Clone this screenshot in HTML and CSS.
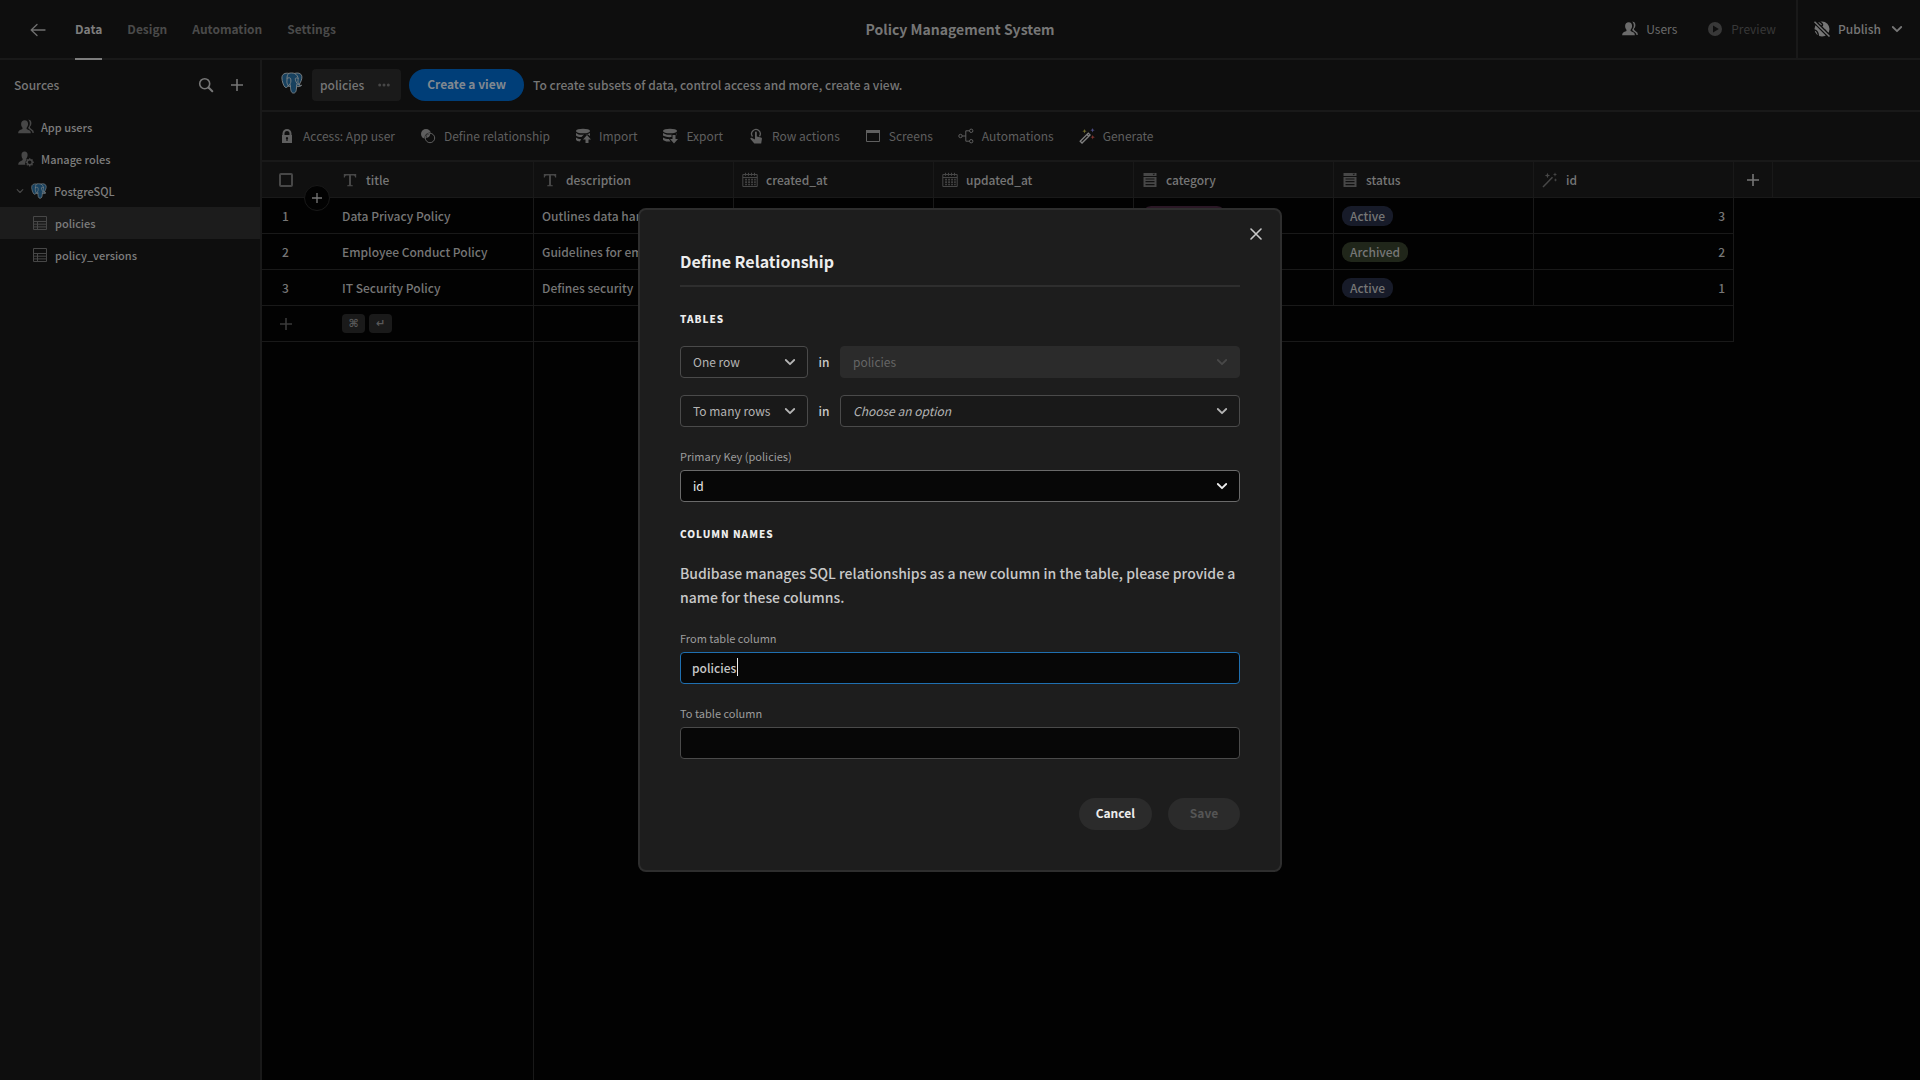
FILE: index.html
```html
<!DOCTYPE html>
<html lang="en">
<head>
<meta charset="utf-8">
<title>Policy Management System</title>
<link rel="stylesheet" href="styles.css">
</head>
<body>
<svg class="sprite" aria-hidden="true">
  <symbol id="users" viewBox="0 0 16 16"><path fill="currentColor" d="M10 .8c2.300-.5 3.600 1.300 3.400 3.600-.1 1.500-.8 2.500-1.300 3.200-.3.5-.1 1.300.4 1.600l3 2.500.3 2.200h-1.300c-.2-1.200-.6-1.900-1.500-2.500l-2.300-1.600c-.5-.4-.5-1.200-.2-1.700.8-1 1.300-2.200 1.300-3.700 0-1.700-.6-3-1.800-3.600z"/><path fill="currentColor" d="M6.700 1.300c2.200 0 3.400 1.600 3.400 3.700 0 1.500-.6 2.600-1.300 3.500-.4.5-.3 1.500.3 1.800 2 1 3.600 1.300 3.800 3.900H.1c.2-2.600 1.700-3 3.900-3.900.6-.3.7-1.300.3-1.800C3.600 7.600 3.100 6.500 3.100 5c0-2.100 1.400-3.700 3.600-3.700z"/></symbol>
  <symbol id="role" viewBox="0 0 16 16"><path fill="currentColor" d="M6.600.5c2 0 3 1.500 3 3.400 0 1.600-.6 2.600-1.200 3.500-.3.500-.2 1 .2 1.300-1.400 1.400-1.800 3.300-1.200 5H.2c.1-2.600 1.500-3.200 3.800-4.200.8-.3.900-1.300.5-1.900C3.900 6.700 3.500 5.600 3.500 4c0-2 1-3.500 3.100-3.500z"/><circle cx="11.700" cy="11.300" r="2.500" fill="none" stroke="currentColor" stroke-width="1.400"/><path stroke="currentColor" stroke-width="1.400" d="M11.700 7.200v1.500M11.700 13.900v1.500M7.600 11.300h1.500M14.300 11.300h1.500M8.800 8.400l1 1M13.500 13.200l1 1M8.800 14.200l1-1M13.500 9.400l1-1"/></symbol>
  <symbol id="postgres" viewBox="0 0 24 24"><path fill="#17415f" stroke="#7f8385" stroke-width="1" stroke-linejoin="round" d="M8.500 1.500C4.500.8 1 2 1 6.500c0 3 1.700 8.700 3.500 10.100 1.200.9 2.200.1 3.500-1.400.7.500 1.500.6 2.300.5.100 2.300.3 7.300 3.200 7.300 2.800 0 3.300-2.500 3.500-7.200 1.500.4 4.200.3 5.500-1.300-.8.100-2.300.2-2.900-.2C21.800 10.800 23.200 7.200 22.700 4.600 22 1 17.700.600 14.900 1.600 12.700.9 10.300.9 8.500 1.500z"/><path fill="none" stroke="#7f8385" stroke-width="1" stroke-linecap="round" d="M8.500 1.500C6.700 3 6.500 5 6.600 7.400c.1 2-.6 3.300.2 5.300.3.900.8 1.500 1.200 2.500M6.700 6.800c1.500-.8 3.700-.8 3.900.7.100 1.500.6 3.300-.6 5.200-.5.900-1.400 1.600-2 2.500M10.300 15.700c.2-1.200.1-1.800-.5-2.300M14.900 1.600c3 1.600 3.700 4 3.800 5.600.1 1.800-.7 3.300.1 4.500.4.700.8 1.100.8 1.700M18.700 6.900c-1.200-.7-3-.6-3.100.500 0 1.500.500 2.700 1.600 4.700.5 1 .9 1.500 2.400 1.300M17 15.600c-.2-1.200.100-1.600.6-2.500"/></symbol>
  <symbol id="table" viewBox="0 0 16 16"><path fill="none" stroke="currentColor" d="M1.500 1.500h13v13h-13zM1.500 6.500h13M1.500 9.200h13M1.500 11.900h13M5.500 6.500v8"/></symbol>
  <symbol id="chevron" viewBox="0 0 12 12"><path fill="none" stroke="currentColor" stroke-width="1.800" stroke-linecap="round" stroke-linejoin="round" d="M1.800 4L6 8.200 10.200 4"/></symbol>
  <symbol id="plus" viewBox="0 0 12 12"><path stroke="currentColor" stroke-width="1.600" d="M6 0v12M0 6h12"/></symbol>
  <symbol id="text" viewBox="0 0 16 16"><path fill="currentColor" d="M1.800 2h12.400v3.500h-1.100c-.2-1.300-.6-2-1.800-2H9v8.700c0 .7.300 1 1.800 1.100v.9H5.200v-.9C6.700 13.200 7 12.900 7 12.200V3.500H4.700c-1.200 0-1.600.7-1.800 2H1.800z"/></symbol>
  <symbol id="calendar" viewBox="0 0 16 16"><path fill="none" stroke="currentColor" d="M.8 2.500h14.400v12H.8zM.8 5.500h14.400M3.500.8v3M6.500.8v3M9.500.8v3M12.500.8v3"/><path stroke="currentColor" stroke-width="1.700" stroke-dasharray="1.700 1.300" d="M3.200 7.600h10.500M3.200 10.100h10.500M3.200 12.500h10.500"/></symbol>
  <symbol id="list" viewBox="0 0 16 16"><path fill="currentColor" fill-rule="evenodd" d="M1.500 1h13v3h-13zM10.500 1.700l1.300 1.500 1.300-1.500zM1.500 5h13v10h-13zM3.500 6.500v1h9v-1zM3.500 9v1.200h9V9zM3.500 12v1.200h9V12z"/></symbol>
  <symbol id="wand" viewBox="0 0 16 16"><path stroke="currentColor" stroke-width="1.500" d="M1 15L10.500 5.300"/><path fill="currentColor" d="M5.500.8l.7 2 2 .7-2 .8-.7 2-.8-2-2-.8 2-.7zM13 .3l.6 1.600 1.600.6-1.600.6-.6 1.600-.6-1.600-1.600-.6 1.600-.6zM13.500 6.300l.5 1.200 1.200.5-1.200.5-.5 1.200-.5-1.200-1.200-.5 1.200-.5z"/></symbol>
</svg>

<div class="app">
  <header class="topbar">
    <nav class="tabs">
      <a class="back" href="#" aria-label="Back"><svg class="i16" viewBox="0 0 16 16"><path fill="none" stroke="currentColor" stroke-width="1.300" stroke-linecap="round" stroke-linejoin="round" d="M15 8H1.200M7 2.500L1.200 8 7 13.500"/></svg></a>
      <a class="tab active" href="#">Data</a>
      <a class="tab" href="#">Design</a>
      <a class="tab" href="#">Automation</a>
      <a class="tab" href="#">Settings</a>
    </nav>
    <h1 class="app-name">Policy Management System</h1>
    <div class="top-actions">
      <button class="top-btn"><svg class="i16"><use href="#users"/></svg>Users</button>
      <button class="top-btn preview" disabled><svg class="i16" viewBox="0 0 16 16"><path fill="currentColor" fill-rule="evenodd" d="M8 1a7 7 0 1 0 0 14A7 7 0 0 0 8 1zM6 4.600L11.800 8 6 11.400z"/></svg>Preview</button>
      <button class="top-btn publish"><svg class="i16" viewBox="0 0 16 16"><circle cx="8" cy="8" r="7.500" fill="currentColor"/><path stroke="#0e0e0e" stroke-width="1.400" fill="none" d="M5 0c1 2 3 1.500 3.500 3.500S6 5 6 6M10 9c1.500 0 2 1 1.500 3M0 9c2 0 4 2 4.500 6"/><path stroke="#0e0e0e" stroke-width="4" d="M0 0l16 16"/><path stroke="currentColor" stroke-width="1.500" d="M.5.8l15 14.700"/></svg>Publish<svg class="i12"><use href="#chevron"/></svg></button>
    </div>
  </header>

  <div class="body">
    <aside class="sidebar">
      <div class="side-head">
        <h2 class="side-title">Sources</h2>
        <button class="icon-btn" aria-label="Search"><svg class="i16" viewBox="0 0 16 16"><circle cx="6.700" cy="6.700" r="5" fill="none" stroke="currentColor" stroke-width="1.600"/><path stroke="currentColor" stroke-width="2" stroke-linecap="round" d="M10.500 10.500L14.300 14.300"/></svg></button>
        <button class="icon-btn" aria-label="Add source"><svg class="i12"><use href="#plus"/></svg></button>
      </div>
      <nav class="tree">
        <a class="node" href="#"><svg class="i16"><use href="#users"/></svg>App users</a>
        <a class="node" href="#"><svg class="i16"><use href="#role"/></svg>Manage roles</a>
        <a class="node source" href="#"><svg class="i8"><use href="#chevron"/></svg><svg class="i16"><use href="#postgres"/></svg>PostgreSQL</a>
        <a class="node child selected" href="#"><svg class="i16"><use href="#table"/></svg>policies</a>
        <a class="node child" href="#"><svg class="i16"><use href="#table"/></svg>policy_versions</a>
      </nav>
    </aside>

    <main class="main">
      <div class="viewbar">
        <svg class="logo"><use href="#postgres"/></svg>
        <a class="view" href="#">policies<svg class="dots" viewBox="0 0 12 12"><g fill="currentColor"><circle cx="1.700" cy="6" r="1.500"/><circle cx="6" cy="6" r="1.500"/><circle cx="10.300" cy="6" r="1.500"/></g></svg></a>
        <button class="create">Create a view</button>
        <p class="hint">To create subsets of data, control access and more, create a view.</p>
      </div>
      <div class="toolbar">
        <button class="tool"><svg class="i16" viewBox="0 0 16 16"><path fill="currentColor" fill-rule="evenodd" d="M3.500 7V5.500a4.500 4.500 0 0 1 9 0V7h.5v8H3V7zM5.500 7h5V5.500a2.500 2.500 0 0 0-5 0zM8 9a1.200 1.200 0 0 0-.6 2.200V13h1.200v-1.800A1.200 1.200 0 0 0 8 9z"/></svg>Access: App user</button>
        <button class="tool"><svg class="i16" viewBox="0 0 16 16"><circle cx="6" cy="6" r="5" fill="currentColor"/><circle cx="10" cy="10" r="5.500" fill="#0e0e0e"/><circle cx="10" cy="10" r="4.700" fill="none" stroke="currentColor"/><path fill="currentColor" d="M6.200 10a4.500 4.500 0 0 1 4-4.200 4.500 4.500 0 0 1-4 4.200z"/></svg>Define relationship</button>
        <button class="tool"><svg class="i16" viewBox="0 0 16 16"><ellipse cx="8" cy="3" rx="7" ry="2.300" fill="currentColor"/><path fill="currentColor" d="M1 5c2 2 6 2 8 1.500L6.500 9C4 9 2 8.500 1 7.500zM1 9.500c1.500 1 3 1.500 5 1.500L5 13.500C3 13.500 1 12.500 1 11.500zM10 6.500c2-.2 4-.7 5-1.500v3l-3-2.200zM12 7l4 4.500h-2.500V15h-3v-3.500H8z"/></svg>Import</button>
        <button class="tool"><svg class="i16" viewBox="0 0 16 16"><ellipse cx="8" cy="3" rx="7" ry="2.300" fill="currentColor"/><path fill="currentColor" d="M1 5c3 2 7 2 8.500 1.500V9C6 9.500 2 8.500 1 7.500zM1 9.500c2 1 3.500 1.500 6 1.500l1.500 2.500C4 14 1 12.500 1 11.500zM10.500 7h3v4H16l-4 4.500L8 11h2.500zM14.500 5.800L15 5v3z"/></svg>Export</button>
        <button class="tool"><svg class="i16" viewBox="0 0 16 16"><path fill="none" stroke="currentColor" stroke-width="1.300" d="M4.500 8.500a4.300 4.300 0 1 1 7-.2"/><path fill="currentColor" d="M7 4.500c0-1.300 1.800-1.300 1.800 0v4l4.200 1c.8.300 1 .8.900 1.500l-.7 4.500H6.300L2.500 11c-.5-.8.5-1.500 1.500-1l3 1.500z"/></svg>Row actions</button>
        <button class="tool"><svg class="i16" viewBox="0 0 16 16"><path fill="none" stroke="currentColor" d="M1.500 2.500h13v11h-13z"/><path fill="currentColor" d="M1 2h14v3H1z"/></svg>Screens</button>
        <button class="tool"><svg class="i16" viewBox="0 0 16 16"><g fill="none" stroke="currentColor"><circle cx="2.500" cy="8" r="1.700"/><circle cx="13.200" cy="2.800" r="1.700"/><circle cx="13.200" cy="13.200" r="1.700"/><path d="M4.200 8h3.600M11.500 2.800H7.800v10.400h3.700"/></g></svg>Automations</button>
        <button class="tool generate"><svg class="i16" viewBox="0 0 16 16"><path fill="none" stroke="#808080" stroke-width="1.300" d="M1.200 13.200L9.300 5.100l1.800 1.800-8.100 8.100zM8 6.500l1.800 1.800"/><path fill="#6f6a2c" d="M5.500 1l.6 1.600 1.600.6-1.600.6-.6 1.600-.6-1.600-1.600-.6 1.600-.6z"/><path fill="#4a4a80" d="M13.500 0l.6 1.600 1.600.6-1.600.6-.6 1.600-.6-1.600-1.600-.6 1.600-.6z"/><path fill="#80352f" d="M13.700 7l.6 1.600 1.600.6-1.600.6-.6 1.600-.6-1.600-1.600-.6 1.600-.6z"/></svg>Generate</button>
      </div>

      <div class="grid">
        <table class="rows">
          <colgroup><col class="c-num"><col class="c"><col class="c"><col class="c"><col class="c"><col class="c"><col class="c"><col class="c"><col class="c-add"><col></colgroup>
          <thead>
            <tr>
              <th class="num"><input class="check" type="checkbox" aria-label="Select all rows"></th>
              <th><span class="head"><svg class="i16"><use href="#text"/></svg>title</span></th>
              <th><span class="head"><svg class="i16"><use href="#text"/></svg>description</span></th>
              <th><span class="head"><svg class="i16"><use href="#calendar"/></svg>created_at</span></th>
              <th><span class="head"><svg class="i16"><use href="#calendar"/></svg>updated_at</span></th>
              <th><span class="head"><svg class="i16"><use href="#list"/></svg>category</span></th>
              <th><span class="head"><svg class="i16"><use href="#list"/></svg>status</span></th>
              <th><span class="head"><svg class="i16"><use href="#wand"/></svg>id</span></th>
              <th class="add"><button class="icon-btn" aria-label="Add column"><svg class="i12"><use href="#plus"/></svg></button></th>
              <th class="rest"></th>
            </tr>
          </thead>
          <tbody>
            <tr><td class="num">1</td><td>Data Privacy Policy</td><td>Outlines data handling</td><td></td><td></td><td><span class="pill pink">Compliance</span></td><td><span class="pill blue">Active</span></td><td class="right">3</td></tr>
            <tr><td class="num">2</td><td>Employee Conduct Policy</td><td>Guidelines for employees</td><td></td><td></td><td></td><td><span class="pill green">Archived</span></td><td class="right">2</td></tr>
            <tr><td class="num">3</td><td>IT Security Policy</td><td>Defines security</td><td></td><td></td><td></td><td><span class="pill blue">Active</span></td><td class="right">1</td></tr>
            <tr class="new"><td class="num"><svg class="i12"><use href="#plus"/></svg></td><td><span class="keys"><kbd>⌘</kbd><kbd>↵</kbd></span></td><td colspan="6"></td></tr>
          </tbody>
        </table>
        <div class="sticky-tail"></div>
        <button class="insert" aria-label="Insert row"><svg class="i10"><use href="#plus"/></svg></button>
      </div>
    </main>
  </div>
</div>

<div class="overlay">
  <form class="modal" role="dialog" aria-labelledby="dlg-title">
    <button class="close" type="button" aria-label="Close"><svg class="i12" viewBox="0 0 12 12"><path stroke="currentColor" stroke-width="1.600" stroke-linecap="round" d="M1 1l10 10M11 1L1 11"/></svg></button>
    <h2 class="title" id="dlg-title">Define Relationship</h2>
    <section class="block">
      <h3 class="section">Tables</h3>
      <div class="pair">
        <span class="select"><select aria-label="From cardinality"><option>One row</option></select><svg class="i12"><use href="#chevron"/></svg></span>
        <span class="in">in</span>
        <span class="select off"><select aria-label="From table" disabled><option>policies</option></select><svg class="i12"><use href="#chevron"/></svg></span>
      </div>
      <div class="pair">
        <span class="select"><select aria-label="To cardinality"><option>To many rows</option></select><svg class="i12"><use href="#chevron"/></svg></span>
        <span class="in">in</span>
        <span class="select empty"><select aria-label="To table"><option>Choose an option</option></select><svg class="i12"><use href="#chevron"/></svg></span>
      </div>
    </section>
    <div class="field">
      <label for="pk">Primary Key (policies)</label>
      <span class="select solid"><select id="pk"><option>id</option></select><svg class="i12"><use href="#chevron"/></svg></span>
    </div>
    <section class="block">
      <h3 class="section">Column names</h3>
      <p class="note">Budibase manages SQL relationships as a new column in the table, please provide a name for these columns.</p>
    </section>
    <div class="field">
      <label for="from">From table column</label>
      <span class="entry"><input class="input focused" id="from" type="text" value="policies"><i class="caret"></i></span>
    </div>
    <div class="field">
      <label for="to">To table column</label>
      <input class="input" id="to" type="text">
    </div>
    <div class="buttons">
      <button class="btn" type="button">Cancel</button>
      <button class="btn" type="submit" disabled>Save</button>
    </div>
  </form>
</div>
</body>
</html>
```
FILE: styles.css
```css
* { box-sizing: border-box; }
body {
  margin: 0;
  background: #020202;
  color: #767676;
  font: 500 12px/18px "Noto Sans CJK SC", "Noto Sans", sans-serif;
}
h1, h2, h3, p { margin: 0; }
a { color: inherit; text-decoration: none; }
button {
  font: inherit;
  color: inherit;
  background: none;
  border: 0;
  padding: 0;
  white-space: nowrap;
}
svg { display: block; flex: none; }
.sprite { display: none; }
.i8 { width: 8px; height: 8px; }
.i10 { width: 10px; height: 10px; }
.i12 { width: 12px; height: 12px; }
.i16 { width: 16px; height: 16px; }

.app { display: flex; flex-direction: column; min-height: 100vh; }

/* Top bar */
.topbar {
  display: grid;
  grid-template-columns: 1fr auto 1fr;
  height: 60px;
  background: #0e0e0e;
  box-shadow: inset 0 -2px #191919;
}
.tabs { display: flex; gap: 25px; padding-left: 30px; }
.back { display: flex; align-items: center; margin-right: 4px; color: #707070; }
.tab {
  display: flex;
  align-items: center;
  border-bottom: 2px solid transparent;
  color: #4a4a4a;
  font-size: 12px;
  font-weight: 700;
}
.tab.active { color: #7d7d7d; border-color: #7d7d7d; }
.app-name { align-self: center; padding-bottom: 2px; font-size: 14px; font-weight: 700; }
.top-actions { display: flex; justify-content: flex-end; }
.top-btn {
  display: flex;
  align-items: center;
  gap: 8px;
  margin-right: 30px;
  padding-bottom: 2px;
  font-weight: 400;
  color: #6b6b6b;
}
.top-btn.preview { margin-right: 20px; color: #383838; }
.top-btn.publish {
  margin: 0;
  padding: 0 17px 2px 16px;
  border-left: 2px solid #191919;
  color: #767676;
  font-weight: 500;
}
.top-btn.publish .i12 { margin-left: 2px; }

.body { display: flex; flex: 1; }

/* Sources */
.sidebar {
  flex: none;
  width: 262px;
  background: #0e0e0e;
  border-right: 2px solid #191919;
}
.side-head { display: flex; align-items: center; height: 50px; padding: 0 17px 0 14px; gap: 17px; }
.side-title { flex: 1; font-size: 12px; font-weight: 500; }
.icon-btn { display: flex; }
.tree { padding-top: 1px; }
.node {
  display: flex;
  align-items: center;
  gap: 7px;
  height: 32px;
  padding-left: 18px;
  color: #7d7d7d;
  font-size: 11px;
}
.node .i16 { color: #474747; }
.node .i8 { color: #474747; }
.node.source { padding-left: 16px; }
.node.child { padding-left: 32px; }
.node.selected { background: #1c1c1c; }

/* Table header bars */
.main { display: flex; flex: 1; flex-direction: column; min-width: 0; }
.viewbar {
  display: flex;
  align-items: center;
  height: 52px;
  padding-left: 19px;
  border-bottom: 2px solid #191919;
  background: #0e0e0e;
}
.logo { width: 22px; height: 24px; margin-bottom: 4px; }
.view {
  display: flex;
  align-items: center;
  gap: 14px;
  height: 32px;
  margin: 0 8px 0 9px;
  padding: 0 11px 0 8px;
  border-radius: 4px;
  background: #1a1a1a;
}
.dots { width: 12px; height: 12px; color: #474747; }
.create {
  height: 32px;
  margin-right: 9px;
  padding: 0 18px 2px;
  border-radius: 16px;
  background: #003e78;
  color: #808890;
  font-weight: 700;
}
.toolbar {
  display: flex;
  align-items: center;
  gap: 25px;
  height: 50px;
  padding-left: 17px;
  border-bottom: 2px solid #191919;
  background: #0e0e0e;
}
.tool { display: flex; align-items: center; gap: 8px; color: #5f5f5f; font-weight: 400; }

/* Grid */
.grid { position: relative; display: flex; flex: 1; flex-direction: column; }
.rows { width: 100%; table-layout: fixed; border-collapse: separate; border-spacing: 0; }
.c-num { width: 72px; }
.c { width: 200px; }
.c-add { width: 39px; }
th, td {
  height: 36px;
  padding: 0 8px;
  border: 0 solid #191919;
  border-width: 0 1px 1px 0;
  overflow: hidden;
  text-align: left;
  white-space: nowrap;
  font-weight: 500;
}
th { background: #101010; }
.num { padding: 0 25px 0 0; border-right-width: 0; text-align: center; }
.num .i12 { margin: 0 auto; color: #3a3a3a; }
.rest { border-right-width: 0; }
.head { display: flex; align-items: center; gap: 8px; }
.head .i16 { color: #474747; }
.add .icon-btn { margin: 0 auto; }
.right { text-align: right; }
.check {
  appearance: none;
  display: block;
  width: 14px;
  height: 14px;
  margin: 0 auto;
  border: 2px solid #474747;
  border-radius: 2px;
}
.pill { display: inline-block; padding: 1px 8px; border-radius: 9px; vertical-align: middle; }
.pink { background: #2b1826; }
.blue { background: #171b29; }
.green { background: #20261a; }
.keys { display: flex; gap: 4px; }
kbd {
  width: 23px;
  height: 19px;
  border-radius: 4px;
  background: #1a1a1a;
  color: #595959;
  font: 700 11px/19px "DejaVu Sans", sans-serif;
  text-align: center;
}
.sticky-tail { flex: 1; width: 272px; border-right: 1px solid #191919; }
.insert {
  position: absolute;
  left: 42px;
  top: 23px;
  display: grid;
  place-items: center;
  width: 26px;
  height: 26px;
  border: 1px solid #191919;
  border-radius: 50%;
  background: #020202;
}

/* Dialog */
.overlay { position: fixed; inset: 0; display: grid; place-items: center; }
.modal {
  position: relative;
  display: flex;
  flex-direction: column;
  gap: 22px;
  width: 644px;
  padding: 40px;
  border: 2px solid #2e2e2e;
  border-radius: 8px;
  background: #1d1d1d;
  color: #c8c8c8;
}
.close { position: absolute; top: 18px; right: 18px; color: #c8c8c8; }
.title {
  padding-bottom: 13px;
  border-bottom: 2px solid #2e2e2e;
  color: #ededed;
  font-size: 16px;
  line-height: 22px;
  font-weight: 700;
}
.block { display: flex; flex-direction: column; gap: 17px; }
.section {
  color: #ededed;
  font-size: 10px;
  line-height: 20px;
  font-weight: 900;
  letter-spacing: 1px;
  text-transform: uppercase;
}
.pair { display: grid; grid-template-columns: 128px 32px 1fr; align-items: center; }
.in { text-align: center; }
.select { display: grid; align-items: center; color: #b4b4b4; }
.select > * { grid-area: 1 / 1; }
.select svg { justify-self: end; margin-right: 12px; pointer-events: none; }
select, .input {
  width: 100%;
  height: 32px;
  padding: 0 12px;
  border: 1px solid #4a4a4a;
  border-radius: 4px;
  background: #191919;
  color: inherit;
  font: 400 12px/18px "Noto Sans CJK SC", "Noto Sans", sans-serif;
}
select { appearance: none; opacity: 1; }
.off { color: #666; }
.off select { border-color: #2b2b2b; background: #2b2b2b; }
.off svg { color: #484848; }
.empty select { font-style: italic; }
.solid { color: #ededed; }
.solid select, .input { background: #070707; }
.solid select { border-color: #6a6a6a; }
.field { display: flex; flex-direction: column; gap: 6px; }
.field label { color: #9c9c9c; font-size: 11px; line-height: 15px; font-weight: 400; }
.note { font-size: 14px; line-height: 24px; }
.entry { position: relative; display: grid; }
.input { outline: 0; padding: 0 11px 2px; color: #c8c8c8; font-weight: 500; }
.input.focused { border-color: #1f6fb0; }
.caret { position: absolute; left: 57px; top: 6px; width: 1px; height: 18px; background: #ededed; }
.buttons { display: flex; justify-content: flex-end; gap: 16px; margin-top: 17px; }
.btn {
  min-width: 72px;
  height: 32px;
  padding: 0 17px 2px;
  border-radius: 16px;
  background: #2b2b2b;
  color: #ededed;
  font-weight: 700;
}
.btn:disabled { color: #555; }
```
